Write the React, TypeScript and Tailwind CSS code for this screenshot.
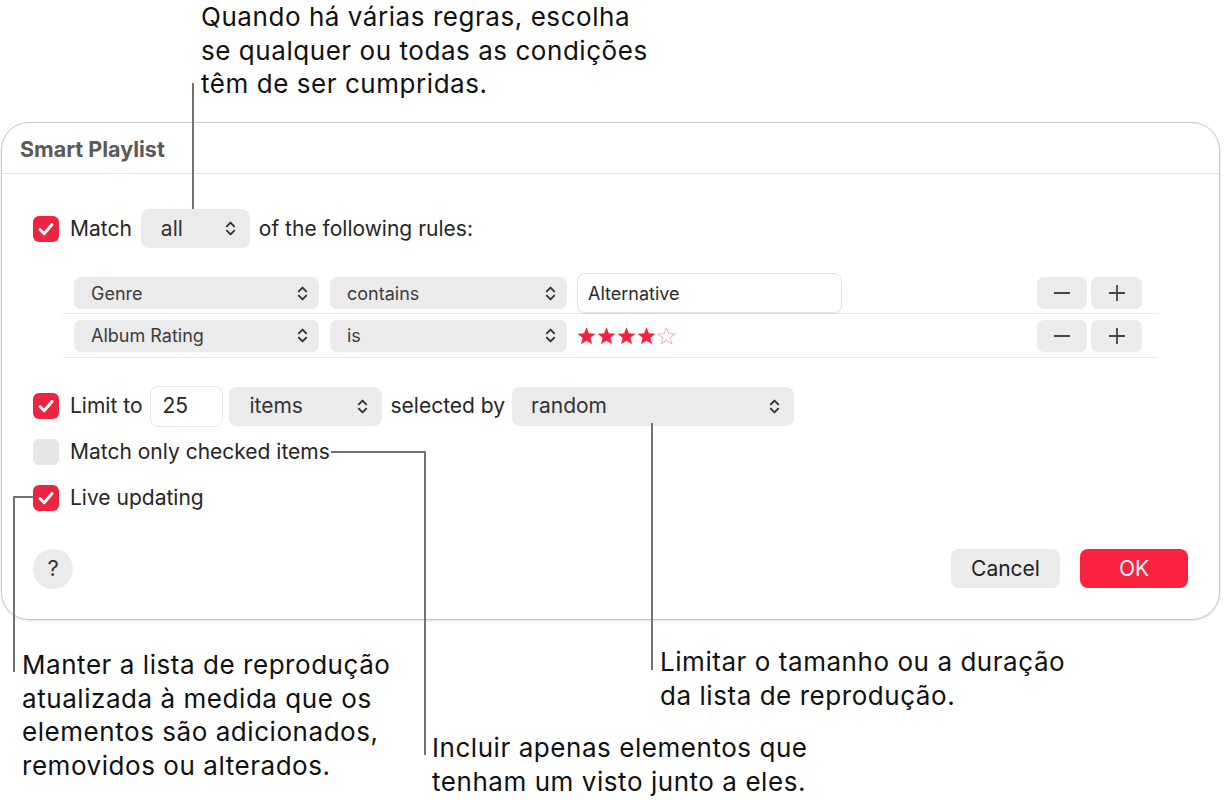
import React from "react";

function Chevron() {
  return (
    <svg width="11" height="17" viewBox="0 0 11 17" fill="none" stroke="#333" strokeWidth="1.9" strokeLinecap="round" strokeLinejoin="round">
      <path d="M1.8 6.3 L5.5 2.6 L9.2 6.3" />
      <path d="M1.8 10.7 L5.5 14.4 L9.2 10.7" />
    </svg>
  );
}

function Check({ on }: { on: boolean }) {
  if (!on) {
    return <div className="w-[26px] h-[26px] rounded-[6px] bg-[#e6e6e6] shrink-0" />;
  }
  return (
    <div className="w-[26px] h-[26px] rounded-[6px] bg-[#ec2440] shrink-0 flex items-center justify-center">
      <svg width="26" height="26" viewBox="0 0 26 26" fill="none" stroke="#fff" strokeWidth="3" strokeLinecap="round" strokeLinejoin="round">
        <path d="M7 13.5 L11.2 17.8 L19 8.5" />
      </svg>
    </div>
  );
}

function Popup({ label, w, pl = "pl-[20px]" }: { label: string; w: string; pl?: string }) {
  return (
    <div className={`${w} h-[39px] ${pl} pr-[14px] rounded-[8px] bg-[#ebebeb] flex items-center justify-between shrink-0`}>
      <span className="text-[21px] text-[#333]">{label}</span>
      <Chevron />
    </div>
  );
}

function RulePopup({ label, w }: { label: string; w: string }) {
  return (
    <div className={`${w} h-[32px] pl-[17px] pr-[11px] rounded-[7px] bg-[#ebebeb] flex items-center justify-between shrink-0`}>
      <span className="text-[18px] text-[#3c3c3c]">{label}</span>
      <Chevron />
    </div>
  );
}

function Star({ filled }: { filled: boolean }) {
  return (
    <svg width="19" height="18" viewBox="0 0 24 23">
      <path
        d="M12 1 L14.9 8.3 L22.8 8.8 L16.7 13.8 L18.7 21.5 L12 17.2 L5.3 21.5 L7.3 13.8 L1.2 8.8 L9.1 8.3 Z"
        fill={filled ? "#f5203e" : "none"}
        stroke={filled ? "#f5203e" : "#f7b3bd"}
        strokeWidth={filled ? 0.5 : 1.3}
        strokeLinejoin="round"
      />
    </svg>
  );
}

function PlusMinus() {
  return (
    <div className="ml-auto flex gap-[4px] pr-[16px]">
      <div className="w-[50px] h-[32px] rounded-[7px] bg-[#ebebeb] flex items-center justify-center">
        <div className="w-[16px] h-[2px] bg-[#444]" />
      </div>
      <div className="w-[51px] h-[32px] rounded-[7px] bg-[#ebebeb] flex items-center justify-center">
        <svg width="16" height="16" viewBox="0 0 16 16" stroke="#444" strokeWidth="1.8">
          <path d="M8 0 V16 M0 8 H16" />
        </svg>
      </div>
    </div>
  );
}

const LINE = "absolute bg-[#737373]";
const CALLOUT = "absolute text-[26px] leading-[33.5px] tracking-[0.55px] text-[#111]";

export default function App() {
  return (
    <div className="relative w-[1224px] h-[801px] bg-white overflow-hidden font-['Inter','Noto_Sans',sans-serif] text-[#1d1d1d]">
      {/* Dialog */}
      <div className="mt-[122px] ml-[1px] w-[1219px] h-[498px] border border-[#c6c6c6] rounded-[28px] shadow-[0_1px_2px_rgba(0,0,0,0.12)] flex flex-col bg-white">
        <div className="h-[51px] pl-[18px] pt-[3px] flex items-center border-b border-[#e4e4e4] shrink-0">
          <span className="font-bold text-[21.5px] text-[#5a5a5a]">Smart Playlist</span>
        </div>
        <div className="flex flex-col pl-[31px] pr-[31px] pt-[35px] text-[21px] text-[#262626]">
          {/* Match row */}
          <div className="h-[39px] flex items-center">
            <Check on />
            <span className="ml-[11px]">Match</span>
            <div className="ml-[9px]">
              <Popup label="all" w="w-[109px]" />
            </div>
            <span className="ml-[9px]">of the following rules:</span>
          </div>

          {/* Rules */}
          <div className="mt-[25px] ml-[30px] w-[1095px] flex flex-col">
            <div className="h-[41px] flex items-center pl-[11px] border-b border-[#e6e6e6]">
              <RulePopup label="Genre" w="w-[245px]" />
              <div className="ml-[11px]">
                <RulePopup label="contains" w="w-[237px]" />
              </div>
              <div className="ml-[10px] w-[265px] h-[40px] rounded-[8px] border border-[#e3e3e3] bg-white shadow-[0_1px_1px_rgba(0,0,0,0.06)] flex items-center pl-[10px]">
                <span className="text-[18px] text-[#2a2a2a]">Alternative</span>
              </div>
              <PlusMinus />
            </div>
            <div className="h-[44px] flex items-center pl-[11px] border-b border-[#e6e6e6]">
              <RulePopup label="Album Rating" w="w-[245px]" />
              <div className="ml-[11px]">
                <RulePopup label="is" w="w-[237px]" />
              </div>
              <div className="ml-[10px] flex gap-[1px] items-center">
                <Star filled />
                <Star filled />
                <Star filled />
                <Star filled />
                <Star filled={false} />
              </div>
              <PlusMinus />
            </div>
          </div>

          {/* Limit row */}
          <div className="mt-[25px] h-[46px] flex items-center">
            <Check on />
            <span className="ml-[11px]">Limit to</span>
            <div className="ml-[8px] w-[73px] h-[41px] rounded-[8px] border border-[#e6e6e6] bg-white flex items-center pl-[11px]">
              <span>25</span>
            </div>
            <div className="ml-[6px]">
              <Popup label="items" w="w-[153px]" />
            </div>
            <span className="ml-[8px]">selected by</span>
            <div className="ml-[7px]">
              <Popup label="random" w="w-[282px]" pl="pl-[19px]" />
            </div>
          </div>

          <div className="h-[46px] flex items-center">
            <Check on={false} />
            <span className="ml-[11px]">Match only checked items</span>
          </div>

          <div className="h-[46px] flex items-center">
            <Check on />
            <span className="ml-[11px]">Live updating</span>
          </div>

          {/* Footer */}
          <div className="mt-[28px] h-[39px] flex items-center">
            <div className="w-[40px] h-[40px] rounded-full bg-[#ebebeb] flex items-center justify-center">
              <span className="text-[22px] text-[#333]">?</span>
            </div>
            <div className="ml-auto flex gap-[20px]">
              <div className="w-[109px] h-[39px] rounded-[8px] bg-[#ebebeb] flex items-center justify-center">
                <span className="text-[21px] text-[#222]">Cancel</span>
              </div>
              <div className="w-[108px] h-[39px] rounded-[8px] bg-[#fb223f] flex items-center justify-center">
                <span className="text-[21px] text-white">OK</span>
              </div>
            </div>
          </div>
        </div>
      </div>

      {/* Callout texts */}
      <div className={`${CALLOUT} left-[201px] top-[0px]`}>
        <p>Quando há várias regras, escolha</p>
        <p>se qualquer ou todas as condições</p>
        <p>têm de ser cumpridas.</p>
      </div>
      <div className={`${CALLOUT} left-[22px] top-[648px]`}>
        <p>Manter a lista de reprodução</p>
        <p>atualizada à medida que os</p>
        <p>elementos são adicionados,</p>
        <p>removidos ou alterados.</p>
      </div>
      <div className={`${CALLOUT} left-[660px] top-[645px]`}>
        <p>Limitar o tamanho ou a duração</p>
        <p>da lista de reprodução.</p>
      </div>
      <div className={`${CALLOUT} left-[432px] top-[731px]`}>
        <p>Incluir apenas elementos que</p>
        <p>tenham um visto junto a eles.</p>
      </div>

      {/* Leader lines */}
      <div className={`${LINE} left-[192px] top-[83px] w-[2px] h-[126px]`} />
      <div className={`${LINE} left-[13px] top-[496px] w-[21px] h-[2px]`} />
      <div className={`${LINE} left-[13px] top-[496px] w-[2px] h-[176px]`} />
      <div className={`${LINE} left-[331px] top-[451px] w-[95px] h-[2px]`} />
      <div className={`${LINE} left-[424px] top-[451px] w-[2px] h-[304px]`} />
      <div className={`${LINE} left-[651px] top-[423px] w-[2px] h-[247px]`} />
    </div>
  );
}
